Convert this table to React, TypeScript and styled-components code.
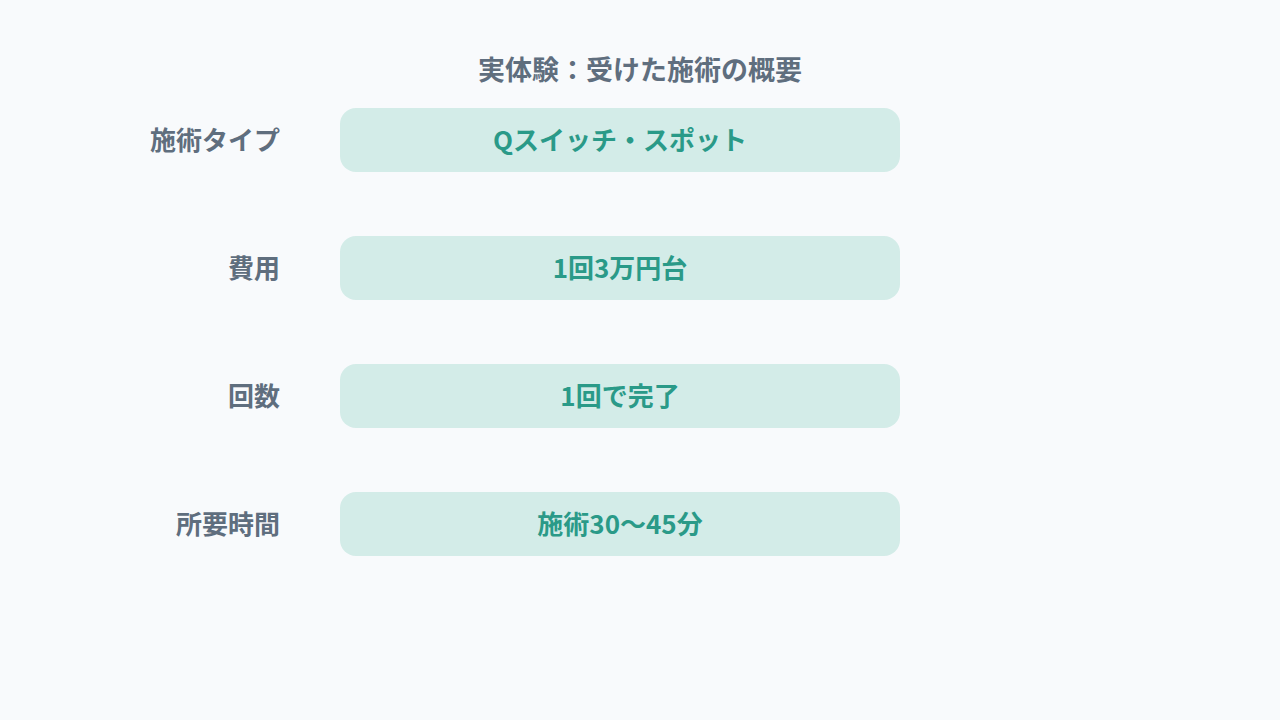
import React from "react";
import styled, { createGlobalStyle } from "styled-components";

const Global = createGlobalStyle`
  html, body { margin: 0; padding: 0; background: #f8fafc; }
  body { font-family: "Noto Sans CJK JP", "Noto Sans", sans-serif; }
`;

const Page = styled.div`
  width: 1280px;
  height: 720px;
  box-sizing: border-box;
  padding-top: 49px;
  background: #f8fafc;
`;

const Title = styled.h1`
  margin: 0 0 19px 0;
  text-align: center;
  font-size: 27px;
  line-height: 40px;
  font-weight: 700;
  color: #5f6e7e;
`;

const Grid = styled.div`
  display: grid;
  grid-template-columns: 180px 560px;
  column-gap: 60px;
  row-gap: 64px;
  margin-left: 100px;
`;

const Label = styled.div`
  display: flex;
  align-items: center;
  justify-content: flex-end;
  box-sizing: border-box;
  height: 64px;
  padding-bottom: 4px;
  font-size: 26px;
  font-weight: 700;
  color: #5f6e7e;
`;

const Value = styled.div`
  display: flex;
  align-items: center;
  justify-content: center;
  box-sizing: border-box;
  height: 64px;
  padding-bottom: 4px;
  border-radius: 16px;
  background: #d3ece8;
  font-size: 26px;
  font-weight: 700;
  color: #2a9a88;
`;

const rows = [
  ["施術タイプ", "Qスイッチ・スポット"],
  ["費用", "1回3万円台"],
  ["回数", "1回で完了"],
  ["所要時間", "施術30〜45分"],
];

export default function App() {
  return (
    <>
      <Global />
      <Page>
        <Title>実体験：受けた施術の概要</Title>
        <Grid>
          {rows.map(([l, v]) => (
            <React.Fragment key={l}>
              <Label>{l}</Label>
              <Value>{v}</Value>
            </React.Fragment>
          ))}
        </Grid>
      </Page>
    </>
  );
}
